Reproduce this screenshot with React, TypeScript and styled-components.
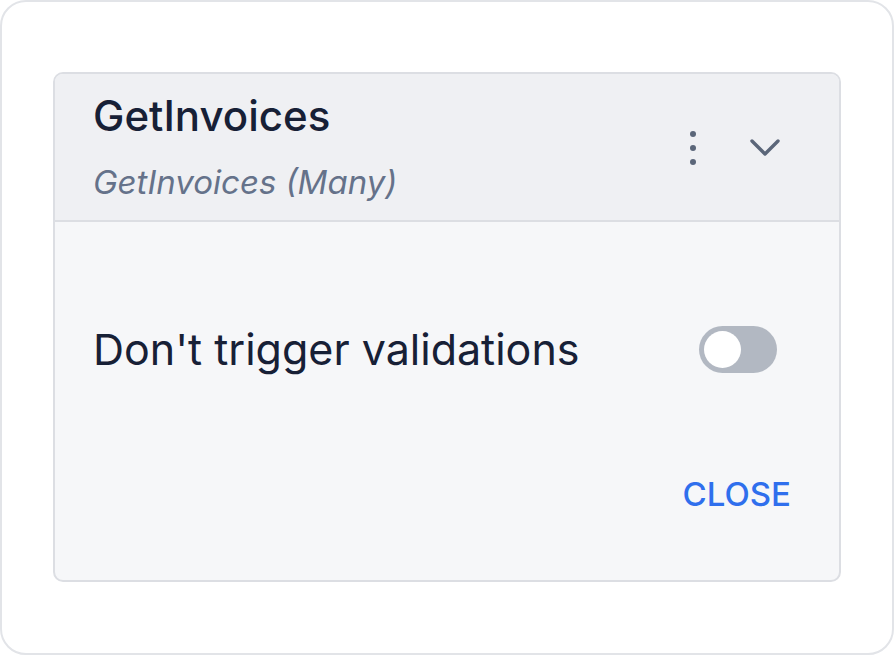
import React, { useState } from 'react'
import styled, { createGlobalStyle } from 'styled-components'

const Global = createGlobalStyle`
  html, body {
    margin: 0;
    padding: 0;
    background: #ffffff;
  }
  body {
    font-family: Inter, 'Noto Sans', sans-serif;
  }
`

const App: React.FC = () => {
  const [on, setOn] = useState(false)

  return (
    <>
      <Global />
      <Frame>
        <Card>
          <Header>
            <Titles>
              <Title>GetInvoices</Title>
              <Subtitle>GetInvoices (Many)</Subtitle>
            </Titles>
            <Actions>
              <IconButton aria-label="more">
                <svg width="12" height="34" viewBox="0 0 12 34">
                  <circle cx="6" cy="3" r="3" fill="#5b6679" />
                  <circle cx="6" cy="17" r="3" fill="#5b6679" />
                  <circle cx="6" cy="31" r="3" fill="#5b6679" />
                </svg>
              </IconButton>
              <IconButton aria-label="expand">
                <svg width="32" height="20" viewBox="0 0 32 20">
                  <path d="M3 3 L16 16 L29 3" fill="none" stroke="#5b6679" strokeWidth="3.4" strokeLinecap="round" strokeLinejoin="round" />
                </svg>
              </IconButton>
            </Actions>
          </Header>
          <Body>
            <Row>
              <Label>Don't trigger validations</Label>
              <Switch on={on} onClick={() => setOn(!on)}>
                <Knob />
              </Switch>
            </Row>
            <Footer>
              <CloseButton>CLOSE</CloseButton>
            </Footer>
          </Body>
        </Card>
      </Frame>
    </>
  )
}

export default App

const Frame = styled.div`
  box-sizing: border-box;
  width: 894px;
  height: 655px;
  border: 2px solid #e2e4e8;
  border-radius: 26px;
  background: #ffffff;
  padding: 70px 51px 0 51px;
`

const Card = styled.div`
  box-sizing: border-box;
  width: 788px;
  height: 510px;
  border: 2px solid #dcdee3;
  border-radius: 10px;
  overflow: hidden;
  display: flex;
  flex-direction: column;
  background: #f6f7f9;
`

const Header = styled.div`
  box-sizing: border-box;
  height: 148px;
  background: #eff0f3;
  border-bottom: 2px solid #dcdee3;
  display: flex;
  align-items: flex-start;
  justify-content: space-between;
  padding: 16px 58px 0 38px;
`

const Titles = styled.div`
  display: flex;
  flex-direction: column;
  gap: 20px;
`

const Title = styled.div`
  font-size: 42px;
  font-weight: 500;
  color: #172036;
  line-height: 52px;
`

const Subtitle = styled.div`
  font-size: 33px;
  font-style: italic;
  color: #65728a;
  line-height: 40px;
`

const Actions = styled.div`
  display: flex;
  align-items: center;
  gap: 50px;
  margin-top: 41px;
`

const IconButton = styled.button`
  border: none;
  background: none;
  padding: 0;
  display: flex;
  align-items: center;
  cursor: pointer;
`

const Body = styled.div`
  flex: 1;
  display: flex;
  flex-direction: column;
  padding: 0 62px 0 38px;
`

const Row = styled.div`
  display: flex;
  align-items: center;
  justify-content: space-between;
  margin-top: 101px;
`

const Label = styled.div`
  font-size: 43px;
  color: #172036;
  line-height: 52px;
`

const Switch = styled.div<{ on: boolean }>`
  box-sizing: border-box;
  width: 78px;
  height: 47px;
  border-radius: 24px;
  background: ${({ on }) => (on ? '#2f6fed' : '#b2b8c2')};
  padding: 5px;
  display: flex;
  justify-content: ${({ on }) => (on ? 'flex-end' : 'flex-start')};
  cursor: pointer;
`

const Knob = styled.div`
  width: 37px;
  height: 37px;
  border-radius: 50%;
  background: #ffffff;
`

const Footer = styled.div`
  display: flex;
  justify-content: flex-end;
  margin-top: 99px;
`

const CloseButton = styled.button`
  border: none;
  background: none;
  padding: 0;
  font-family: Inter, 'Noto Sans', sans-serif;
  font-size: 33px;
  line-height: 40px;
  font-weight: 500;
  color: #2f6fed;
  cursor: pointer;
  margin-right: -14px;
`
